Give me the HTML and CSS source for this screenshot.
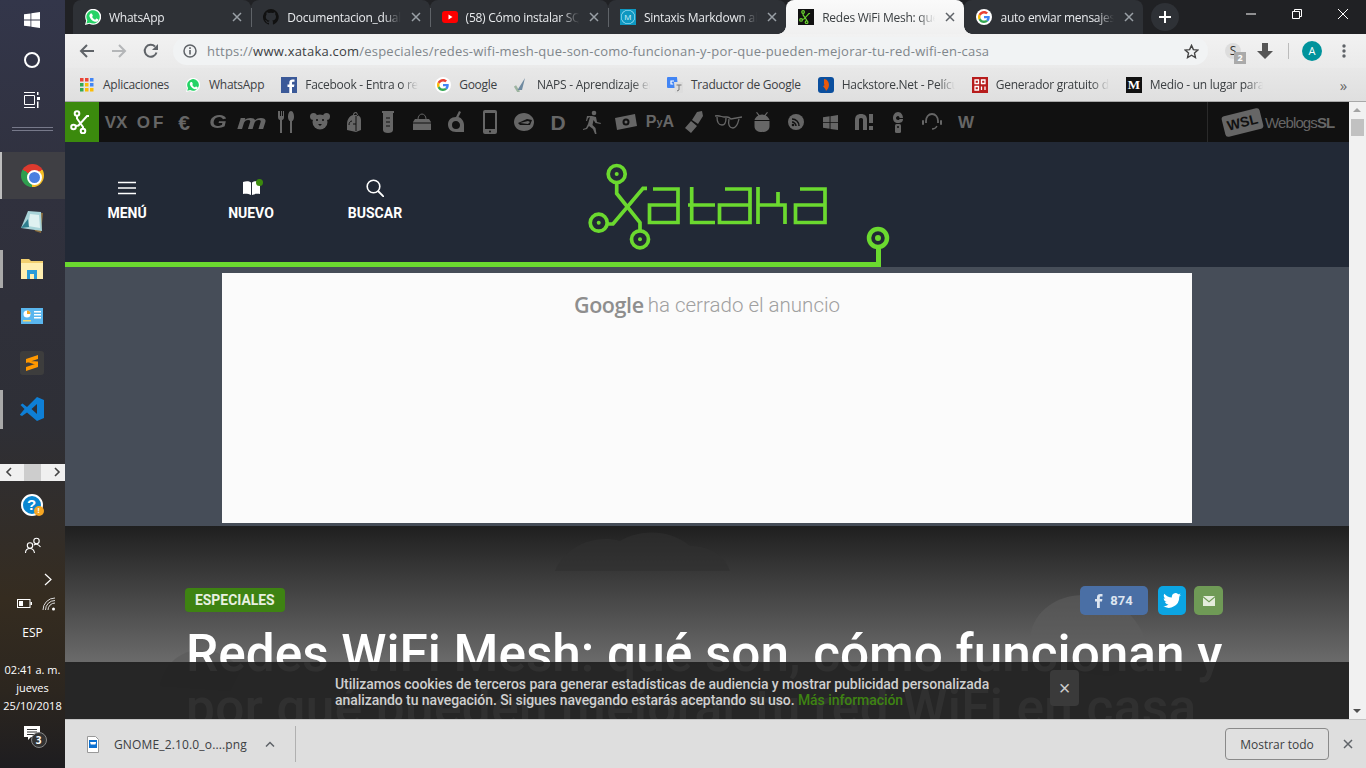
FILE: index.html
```html
<!DOCTYPE html>
<html lang="es">
<head>
    <meta charset="UTF-8">
    <title>Redes WiFi Mesh</title>
    <link rel="stylesheet" href="styles.css">
</head>
<body>
<svg class="defs" width="0" height="0">
    <symbol id="wa" viewBox="1 1 22 22">
        <path fill="#fff" d="M1 23l1.600-6A11 11 0 1 1 7 21.400z"/>
        <path fill="#25d366" d="M3 21l1.200-4.400A9.200 9.200 0 1 1 7.500 19.800z"/>
        <path fill="#fff" d="M8.900 6.800c-.3 0-.8.100-1.200.6-.5.500-1.300 1.300-1.300 3s1.300 3.500 1.500 3.700c.2.300 2.500 3.900 6.100 5.200 3 1.100 3.600.5 4.200.4.700 0 2.100-.9 2.400-1.700.3-.8.3-1.500.2-1.700l-2.800-1.500c-.3-.1-.6-.1-.8.200l-1.100 1.400c-.2.200-.4.300-.8.100-1.500-.7-3.200-1.900-4.400-4.100-.2-.3 0-.5.100-.7l.8-1c.1-.2.200-.4 0-.7l-1.200-3c-.2-.5-.6-.4-.8-.4z" transform="translate(1.500 1.500) scale(.86)"/>
    </symbol>
    <symbol id="gg" viewBox="-8 -8 64 64">
        <circle cx="24" cy="24" r="32" fill="#fff"/>
        <path fill="#EA4335" d="M24 9.500c3.540 0 6.710 1.220 9.210 3.600l6.850-6.850C35.900 2.380 30.470 0 24 0 14.620 0 6.510 5.380 2.560 13.220l7.980 6.190C12.430 13.720 17.740 9.500 24 9.500z"/>
        <path fill="#4285F4" d="M46.980 24.550c0-1.570-.15-3.090-.38-4.550H24v9.020h12.940c-.58 2.960-2.260 5.480-4.780 7.180l7.730 6c4.510-4.180 7.090-10.360 7.090-17.650z"/>
        <path fill="#FBBC05" d="M10.530 28.590c-.48-1.450-.76-2.990-.76-4.590s.27-3.140.76-4.590l-7.980-6.190C.92 16.460 0 20.120 0 24c0 3.880.92 7.540 2.560 10.780l7.970-6.190z"/>
        <path fill="#34A853" d="M24 48c6.480 0 11.930-2.130 15.890-5.810l-7.730-6c-2.150 1.450-4.920 2.300-8.160 2.300-6.260 0-11.570-4.220-13.470-9.910l-7.980 6.190C6.510 42.620 14.620 48 24 48z"/>
    </symbol>
    <symbol id="x-mark" viewBox="0 0 24 24">
        <g fill="none" stroke="currentColor" stroke-width="2">
            <circle cx="7" cy="3.500" r="2.300"/><circle cx="3.500" cy="17" r="2.300"/><circle cx="13" cy="21" r="2.300"/>
            <path d="M7 6v2.500l6 8.500v2M5.500 16l3-.5L17 6h2"/>
        </g>
    </symbol>
    <symbol id="close" viewBox="0 0 10 10">
        <path d="M1 1l8 8M9 1l-8 8" fill="none" stroke="currentColor" stroke-width="1.500"/>
    </symbol>
</svg>

<aside class="taskbar">
    <div class="tb-btn">
        <svg width="16" height="16" viewBox="0 0 16 16"><path fill="#fff" d="M0 2.300l6.500-.9v6.200H0zM7.300 1.300L16 0v7.600H7.300zM0 8.400h6.500v6.200L0 13.700zM7.300 8.400H16V16l-8.700-1.300z"/></svg>
    </div>
    <div class="tb-btn"><span class="cortana"></span></div>
    <div class="tb-btn">
        <svg width="16" height="16" viewBox="0 0 16 16"><path fill="none" stroke="#fff" d="M.5 3.500h10v9H.5zM0 .5h11M0 15.500h11"/><path fill="#fff" d="M13 0h1.500v3H13zM13 5h3v3h-3zM13 9.500h1.500V16H13z"/></svg>
    </div>
    <div class="tb-grip"></div>
    <ul class="tb-apps">
        <li class="tb-app tb-app-active"><span class="chrome-icon"></span></li>
        <li class="tb-app">
            <svg width="24" height="24" viewBox="0 0 24 24"><path fill="#8a6b3a" d="M9 2l14 1-2 20-6-2z"/><path fill="#a8d3d8" d="M8 1l13 1 1 19L1 18z"/><path fill="#dff1f1" d="M10 4l9 1 1 13-12-2z"/><path fill="#2f7f8f" d="M1 18l7-9 1 8z"/></svg>
        </li>
        <li class="tb-app tb-app-open">
            <svg width="22" height="20" viewBox="0 0 22 20"><path fill="#f2cf6f" d="M0 0h8l2 2h12v18H0z"/><path fill="#ffeeb0" d="M0 4h22v16H0z"/><path fill="#2a9bd8" d="M6 11h10v9h-3v-5H9v5H6z"/></svg>
        </li>
        <li class="tb-app">
            <svg width="22" height="16" viewBox="0 0 22 16"><rect width="22" height="16" fill="#5ab6ee"/><circle cx="6" cy="6" r="3.500" fill="#fff"/><path fill="#f5a623" d="M6 6V2.500A3.500 3.500 0 0 1 9.500 6z"/><path fill="#fff" d="M13 3h7v1.500h-7zM13 6h7v1.500h-7zM13 9h7v1.500h-7z"/><path fill="#f5d76e" d="M2 12h8v1.500H2z"/></svg>
        </li>
        <li class="tb-app">
            <span class="sublime-box">
                <svg width="12" height="16" viewBox="0 0 12 16"><path fill="#ff9800" d="M12 0v4L0 8V4zM12 6.500v4L0 6.500v-1zM12 8v4L0 16v-4z"/></svg>
            </span>
        </li>
        <li class="tb-app tb-app-open">
            <svg width="24" height="24" viewBox="0 0 24 24"><path fill="#0e7fd6" fill-rule="evenodd" d="M17 0l7 3v18l-7 3-10-8.500L2 19l-2-1v-.5L4.500 12 .5 8 2.500 6.500 7 10zM17 7l-5.500 5L17 17z"/></svg>
        </li>
    </ul>
    <div class="tb-scroller">
        <span class="tb-scroll-arrow">
            <svg width="8" height="10" viewBox="0 0 8 10"><path d="M6 1L2 5l4 4" fill="none" stroke="#444" stroke-width="1.600"/></svg>
        </span>
        <span class="tb-scroll-thumb"></span>
        <span class="tb-scroll-arrow">
            <svg width="8" height="10" viewBox="0 0 8 10"><path d="M2 1l4 4-4 4" fill="none" stroke="#444" stroke-width="1.600"/></svg>
        </span>
    </div>
    <div class="tray">
        <div class="tray-help">
            <span class="help-circle">?</span><span class="help-badge">!</span>
        </div>
        <div class="tray-people">
            <svg width="18" height="18" viewBox="0 0 18 18"><g fill="none" stroke="#fff" stroke-width="1.100"><circle cx="12.500" cy="4" r="2.700"/><circle cx="6" cy="8.500" r="2.700"/><path d="M1.500 16c0-3 2-4.500 4.500-4.500s4 1.500 4.500 4.500M10 8c1-1 4-1.500 6.500 2"/></g></svg>
        </div>
        <div class="tray-chevron">
            <svg width="9" height="13" viewBox="0 0 9 13"><path d="M1 1l6 5.500L1 12" fill="none" stroke="#fff" stroke-width="1.200"/></svg>
        </div>
        <div class="tray-status">
            <svg width="15" height="9" viewBox="0 0 15 9"><rect x=".5" y=".5" width="12.500" height="8" fill="none" stroke="#fff"/><rect x="2" y="2" width="4" height="5" fill="#fff"/><rect x="13.500" y="3" width="1.500" height="3" fill="#fff"/></svg>
            <svg width="14" height="14" viewBox="0 0 14 14"><g fill="none" stroke="#ddd"><path d="M1 13A12 12 0 0 1 13 1"/><path d="M3.500 13A9.500 9.500 0 0 1 13 3.500"/><path d="M6 13a7 7 0 0 1 7-7"/></g><circle cx="11.500" cy="12" r="1.500" fill="#fff"/></svg>
        </div>
        <div class="tray-lang">ESP</div>
        <div class="tray-clock">02:41 a. m.<br>jueves<br>25/10/2018</div>
        <div class="tray-notif">
            <svg width="16" height="14" viewBox="0 0 16 14"><path fill="#fff" d="M0 0h16v11H7l-3 3v-3H0z"/><path stroke="#333" d="M3 3.500h10M3 6h10M3 8.500h7"/></svg>
            <span class="notif-count">3</span>
        </div>
    </div>
</aside>

<div class="browser">
    <div class="tabstrip">
        <div class="tab">
            <svg class="fav"><use href="#wa"/></svg>
            <span class="tab-title">WhatsApp</span>
            <svg class="tab-close"><use href="#close"/></svg>
        </div>
        <div class="tab">
            <svg class="fav" viewBox="0 0 16 16"><path fill="#111" d="M8 0a8 8 0 0 0-2.500 15.600c.4.100.5-.2.500-.4v-1.400c-2.200.5-2.700-1-2.700-1-.4-.9-.9-1.200-.9-1.200-.7-.5.100-.5.100-.5.800.1 1.200.8 1.200.8.700 1.200 1.900.9 2.300.7.100-.5.300-.9.500-1.100-1.800-.2-3.700-.9-3.700-4 0-.9.300-1.600.8-2.100-.1-.2-.4-1 .1-2.100 0 0 .7-.2 2.200.8a7.600 7.600 0 0 1 4 0c1.500-1 2.200-.8 2.200-.8.400 1.100.2 1.900.1 2.100.5.600.8 1.300.8 2.100 0 3.100-1.900 3.700-3.700 3.900.3.300.6.700.6 1.500v2.200c0 .2.100.5.600.4A8 8 0 0 0 8 0z"/></svg>
            <span class="tab-title">Documentacion_dual_boot</span>
            <svg class="tab-close"><use href="#close"/></svg>
        </div>
        <div class="tab">
            <svg class="fav" viewBox="0 0 16 16"><rect y="2" width="16" height="12" rx="3" fill="#f00"/><path fill="#fff" d="M6.500 5.500l4 2.500-4 2.500z"/></svg>
            <span class="tab-title">(58) Cómo instalar SQLite</span>
            <svg class="tab-close"><use href="#close"/></svg>
        </div>
        <div class="tab tab-before-active">
            <span class="fav fav-md">M</span>
            <span class="tab-title">Sintaxis Markdown al detalle</span>
            <svg class="tab-close"><use href="#close"/></svg>
        </div>
        <div class="tab tab-active">
            <span class="fav fav-xataka"><svg width="14" height="14" color="#6bd62f"><use href="#x-mark"/></svg></span>
            <span class="tab-title">Redes WiFi Mesh: qué son</span>
            <svg class="tab-close"><use href="#close"/></svg>
        </div>
        <div class="tab">
            <svg class="fav" viewBox="0 0 16 16"><use href="#gg"/></svg>
            <span class="tab-title">auto enviar mensajes whatsapp</span>
            <svg class="tab-close"><use href="#close"/></svg>
        </div>
        <div class="tab-new">
            <svg width="12" height="12" viewBox="0 0 12 12"><path d="M6 0v12M0 6h12" stroke="#fff" stroke-width="2"/></svg>
        </div>
        <div class="win-controls">
            <svg width="10" height="10" viewBox="0 0 10 10"><path d="M0 5h10" stroke="#fff"/></svg>
            <svg width="10" height="10" viewBox="0 0 10 10"><path fill="none" stroke="#fff" d="M.5 2.500h7v7h-7zM2.500 2.500v-2h7v7h-2"/></svg>
            <svg width="10" height="10" viewBox="0 0 10 10"><path d="M0 0l10 10M10 0L0 10" stroke="#fff"/></svg>
        </div>
    </div>

    <div class="toolbar">
        <svg class="tool" width="16" height="16" viewBox="0 0 16 16"><path d="M15 8H2M8 2L2 8l6 6" fill="none" stroke="#5f6368" stroke-width="2"/></svg>
        <svg class="tool" width="16" height="16" viewBox="0 0 16 16"><path d="M1 8h13M8 2l6 6-6 6" fill="none" stroke="#b4b6b8" stroke-width="2"/></svg>
        <svg class="tool" width="16" height="16" viewBox="0 0 16 16"><path d="M13.500 9.500A6 6 0 1 1 12 3.500" fill="none" stroke="#5f6368" stroke-width="2"/><path fill="#5f6368" d="M15 1v6H9z"/></svg>
        <div class="omnibox">
            <svg width="14" height="14" viewBox="0 0 14 14"><circle cx="7" cy="7" r="6" fill="none" stroke="#5f6368" stroke-width="1.500"/><path d="M6.200 6h1.600v4.500H6.200zM6.200 3.300h1.600v1.600H6.200z" fill="#5f6368"/></svg>
            <span class="url">https://<b>www.xataka.com</b>/especiales/redes-wifi-mesh-que-son-como-funcionan-y-por-que-pueden-mejorar-tu-red-wifi-en-casa</span>
            <svg class="star" width="15" height="15" viewBox="0 0 16 16"><path d="M8 1.500l2 4.500 4.800.5-3.600 3.200 1 4.800L8 12l-4.200 2.500 1-4.800L1.200 6.500 6 6z" fill="none" stroke="#444" stroke-width="1.500"/></svg>
        </div>
        <div class="ext-s">S<span class="ext-badge">2</span></div>
        <svg class="ext-down" width="16" height="16" viewBox="0 0 16 16"><path fill="#555" d="M5 0h6v8h5l-8 8-8-8h5z"/></svg>
        <span class="tool-sep"></span>
        <span class="avatar">A</span>
        <svg class="dots" width="4" height="14" viewBox="0 0 4 14"><circle cx="2" cy="2" r="1.700" fill="#5f6368"/><circle cx="2" cy="7" r="1.700" fill="#5f6368"/><circle cx="2" cy="12" r="1.700" fill="#5f6368"/></svg>
    </div>

    <div class="bookmarks">
        <div class="bm">
            <svg class="bm-ico" viewBox="0 0 14 14"><g fill="#ea4335"><rect width="3.500" height="3.500"/><rect x="5" width="3.500" height="3.500"/></g><rect x="10" width="3.500" height="3.500" fill="#4285f4"/><rect y="5" width="3.500" height="3.500" fill="#34a853"/><rect x="5" y="5" width="3.500" height="3.500" fill="#fbbc05"/><rect x="10" y="5" width="3.500" height="3.500" fill="#4285f4"/><rect y="10" width="3.500" height="3.500" fill="#34a853"/><rect x="5" y="10" width="3.500" height="3.500" fill="#fbbc05"/><rect x="10" y="10" width="3.500" height="3.500" fill="#fbbc05"/></svg>
            <span class="bm-text">Aplicaciones</span>
        </div>
        <div class="bm">
            <svg class="bm-ico"><use href="#wa"/></svg>
            <span class="bm-text">WhatsApp</span>
        </div>
        <div class="bm">
            <svg class="bm-ico bm-ico-lg" viewBox="0 0 16 16"><rect width="16" height="16" fill="#3b5998"/><path fill="#fff" d="M11 16V10h2l.4-2.500H11V6c0-.8.300-1.200 1.200-1.200h1.300V2.500h-2c-2 0-3.200 1.200-3.200 3.200v1.800H6.500V10h1.800v6z"/></svg>
            <span class="bm-text bm-fade">Facebook - Entra o regístrate</span>
        </div>
        <div class="bm">
            <svg class="bm-ico bm-ico-lg" viewBox="0 0 16 16"><use href="#gg"/></svg>
            <span class="bm-text">Google</span>
        </div>
        <div class="bm">
            <svg class="bm-ico" viewBox="0 0 14 14"><path d="M1 8l3 5 1.500-.5" fill="none" stroke="#9db4a0" stroke-width="2.500"/><path d="M3.500 12L11 0l-3 12z" fill="#6f8aa0"/></svg>
            <span class="bm-text bm-fade">NAPS - Aprendizaje en línea</span>
        </div>
        <div class="bm">
            <svg class="bm-ico bm-ico-lg" viewBox="0 0 16 16"><path fill="#4285f4" d="M1 0h9l1 11H1a1 1 0 0 1-1-1V1a1 1 0 0 1 1-1z"/><path fill="#ddd" d="M7 5h9v10a1 1 0 0 1-1 1H8z"/><path d="M9.500 8h5M12 8v5l-2 1" fill="none" stroke="#777"/><path d="M7 4H4v3h2.200" fill="none" stroke="#fff" stroke-width="1.200"/></svg>
            <span class="bm-text">Traductor de Google</span>
        </div>
        <div class="bm">
            <svg class="bm-ico bm-ico-lg" viewBox="0 0 16 16"><rect width="16" height="16" rx="3" fill="#0b4f9e"/><path fill="#e8590c" d="M6 2c3 0 5 3 5 6s-2 5-3 6c0-2-2-3-3-5 1 0 2-1 1-2 0-2 0-3 0-5z"/></svg>
            <span class="bm-text bm-fade">Hackstore.Net - Películas</span>
        </div>
        <div class="bm">
            <svg class="bm-ico bm-ico-lg" viewBox="0 0 16 16"><rect width="16" height="16" fill="#b71c1c"/><path fill="none" stroke="#fff" stroke-width="1.300" d="M3 3h3.500v3.500H3zM9.500 3H13v3.500H9.500zM3 9.500h3.500V13H3zM9.500 9.500v3.500M13 9.500V13"/></svg>
            <span class="bm-text bm-fade">Generador gratuito de QR</span>
        </div>
        <div class="bm">
            <span class="medium-ico">M</span>
            <span class="bm-text bm-fade">Medio - un lugar para leer</span>
        </div>
        <span class="bm-more">»</span>
    </div>

    <div class="viewport">
        <main class="page">
            <nav class="sitebar">
                <a class="sitebar-home"><svg width="24" height="24" color="#fff"><use href="#x-mark"/></svg></a>
                <span class="sb-item sb-text">VX</span>
                <span class="sb-item sb-text sb-wide">OF</span>
                <span class="sb-item sb-text sb-big">€</span>
                <span class="sb-item sb-text sb-italic">G</span>
                <span class="sb-item sb-text sb-italic sb-wide-m">m</span>
                <span class="sb-item"><svg width="20" height="24" viewBox="0 0 20 24"><path d="M2 1v6c0 2 1 3 2 3v13h2V10c1 0 2-1 2-3V1H7v5H6V1H5v5H4V1zM15 1c-2 0-3 3-3 6 0 2 1 4 2 4v12h2V11c1 0 2-2 2-4 0-3-1-6-3-6z"/></svg></span>
                <span class="sb-item"><svg width="20" height="18" viewBox="0 0 20 18"><circle cx="3.500" cy="3.500" r="3.500"/><circle cx="16.500" cy="3.500" r="3.500"/><ellipse cx="10" cy="9" rx="7.500" ry="7.500"/><circle cx="7" cy="7" r="1" fill="#111"/><circle cx="13" cy="7" r="1" fill="#111"/><path d="M8 11h4l-2 2z" fill="#111"/></svg></span>
                <span class="sb-item"><svg width="16" height="20" viewBox="0 0 16 20"><path d="M7 3c-4 1-6 5-6 9v6l9 2 5-2V8c0-3-2-5-5-5zM7 3c0-2 1-3 3-3 1 0 2 2 2 4h-1c0-2-1-3-1-3-1 0-2 1-2 2z"/><path d="M6 9c-2 0-3 2-3 4M10 4v15M7 12h3" stroke="#111" fill="none"/></svg></span>
                <span class="sb-item"><svg width="14" height="24" viewBox="0 0 14 24"><path d="M1 1h12v2h-1v17c0 2-2 3-5 3s-5-1-5-3V3H1z"/><path d="M5 8h4M5 12h4M5 16h4" stroke="#111"/></svg></span>
                <span class="sb-item"><svg width="18" height="18" viewBox="0 0 18 18"><path d="M5 6c0-3 2-5 4-5s4 2 4 5" fill="none" stroke="#666"/><path d="M2 6h14l2 3v8H0V9z"/><path d="M0 10h18" stroke="#111"/></svg></span>
                <span class="sb-item"><svg width="18" height="22" viewBox="0 0 18 22"><path fill-rule="evenodd" d="M12 0l2 1-2.500 5c3 1 5.500 4 5.500 8v7H9c-5 0-8-3-8-7.500S4 6 9 6zM9 10a4 4 0 1 0 4 4c0-2-2-4-4-4z"/></svg></span>
                <span class="sb-item"><svg width="14" height="24" viewBox="0 0 14 24"><path d="M2 0h10a2 2 0 0 1 2 2v20a2 2 0 0 1-2 2H2a2 2 0 0 1-2-2V2a2 2 0 0 1 2-2zM2 3v16h10V3z" fill-rule="evenodd"/><circle cx="7" cy="21.500" r="1" fill="#111"/></svg></span>
                <span class="sb-item"><svg width="20" height="18" viewBox="0 0 20 18"><path d="M10 0c5 0 10 4 10 9 0 6-5 9-10 9C4 18 0 14 0 9 0 4 4 0 10 0z"/><path d="M4 10l9-4 5 1-2 5H6z" fill="#111"/><path d="M6 10l8-2 2 1-2 2z"/></svg></span>
                <span class="sb-item sb-text sb-big">D</span>
                <span class="sb-item"><svg width="18" height="24" viewBox="0 0 18 24"><circle cx="11" cy="3" r="2.300"/><path d="M9 6l4 1 1 5 4 1-.5 1-5-1-2-3-1 5 3 3 1 6h-1.500L10 19l-4-3-2 3-4 1v-1l3-1 2-4 2-7-2 1-1 3H3l1-5z"/></svg></span>
                <span class="sb-item"><svg width="22" height="16" viewBox="0 0 22 16"><path d="M0 4l20-4 2 12-20 4z"/><circle cx="11" cy="8" r="3.500" fill="#111"/><circle cx="11" cy="8" r="1.500"/></svg></span>
                <span class="sb-item sb-text sb-pya">P<sub>y</sub>A</span>
                <span class="sb-item"><svg width="18" height="22" viewBox="0 0 18 22"><path d="M6 10l6 5-6 7-6-5zM7 9l5-8 5-1 1 5-5 8z"/></svg></span>
                <span class="sb-item"><svg width="27" height="14" viewBox="0 0 27 14"><g fill="none" stroke="#666" stroke-width="1.300"><path d="M0 1c4-1 7 1 9 1h3c2 0 3 1 4 2l11-2"/><path d="M2 2c0 5 2 8 5 8s4-3 4-7M14 4c-1 5 0 9 4 9s5-5 6-9"/></g></svg></span>
                <span class="sb-item"><svg width="16" height="20" viewBox="0 0 16 20"><path d="M3 0l2.500 3a6 6 0 0 1 5 0L13 0l1 .6-2.300 3C14 5 15 6.500 15.500 8H.5C1 6.500 2 5 4.300 3.600L2 .6zM.5 9h15v5c0 4-3 6-7.500 6S.5 18 .5 14z"/></svg></span>
                <span class="sb-item"><svg width="16" height="16" viewBox="0 0 16 16"><circle cx="8" cy="8" r="8"/><g fill="none" stroke="#111" stroke-width="1.500"><path d="M4 5c4 0 7 3 7 7M4 8c2 0 4 2 4 4"/></g><circle cx="5" cy="11" r="1.300" fill="#111"/></svg></span>
                <span class="sb-item"><svg width="15" height="15" viewBox="0 0 16 16"><path d="M0 2.300l7-1v6.300H0zM8 1.200L16 0v7.600H8zM0 8.400h7v6.300l-7-1zM8 8.400h8V16l-8-1.200z"/></svg></span>
                <span class="sb-item"><svg width="19" height="16" viewBox="0 0 19 16"><path d="M0 16V6c0-4 2-6 6-6s6 2 6 6v10H8V6c0-1 0-2-2-2S4 5 4 6v10zM14 0h4v9h-4zM14 12h4v4h-4z"/></svg></span>
                <span class="sb-item"><svg width="12" height="22" viewBox="0 0 12 22"><path d="M11 7H7.500c0-1-.5-2-1.500-2s-2 1-2 2 1 2 2 2 1.500-.5 1.500-1H11c0 3-2 4-5 4S1 10 1 7s2-6 5-6 5 3 5 6z"/><rect x="3" y="13" width="6" height="9" rx="1.500"/><circle cx="6" cy="16" r="1" fill="#111"/></svg></span>
                <span class="sb-item"><svg width="20" height="18" viewBox="0 0 20 18"><path d="M4 10V8c0-4 2.500-7 6-7s6 3 6 7v2" fill="none" stroke="#666" stroke-width="1.800"/><rect y="7" width="2" height="5" rx="1"/><rect x="18" y="7" width="2" height="5" rx="1"/><path d="M15 13c-1 2-3 3-5 3" fill="none" stroke="#666" stroke-width="1.300"/></svg></span>
                <span class="sb-item sb-text">W</span>
                <div class="wsl">
                    <span class="wsl-badge">WSL</span>
                    <span class="wsl-name">Weblogs<b>SL</b></span>
                </div>
            </nav>

            <header class="masthead">
                <a class="mast-link">
                    <svg width="18" height="13" viewBox="0 0 18 13"><path d="M0 1h18M0 6.500h18M0 12h18" stroke="#fff" stroke-width="1.600"/></svg>
                    <span>MENÚ</span>
                </a>
                <a class="mast-link">
                    <span class="book">
                        <svg width="17" height="14" viewBox="0 0 17 14"><path fill="#fff" d="M0 1c3-1 6-1 8 .5V14c-2-1-5-1.500-8-1zM9 1.500C11 0 14 0 17 1v12c-3-.5-6 0-8 1z"/></svg>
                        <i class="book-dot"></i>
                    </span>
                    <span>NUEVO</span>
                </a>
                <a class="mast-link">
                    <svg width="18" height="18" viewBox="0 0 18 18"><circle cx="7.500" cy="7.500" r="6.300" fill="none" stroke="#fff" stroke-width="1.600"/><path d="M12 12l6 6" stroke="#fff" stroke-width="1.800"/></svg>
                    <span>BUSCAR</span>
                </a>
                <svg class="logo" width="245" height="95" viewBox="0 0 245 95">
                    <g fill="none" stroke="#6bd92f" stroke-width="3.700">
                        <circle cx="28.700" cy="14" r="8.500"/>
                        <circle cx="10.700" cy="62.700" r="8.500"/>
                        <circle cx="52" cy="79.300" r="8.500"/>
                        <path d="M28.700 23v10.500L52 62.700V71"/>
                        <path d="M20 64h5l30-35.700h4"/>
                        <path d="M65 29h25v33.500H61.500V45H90"/>
                        <path d="M103.700 27v35.500H127M100 45h27"/>
                        <path d="M137 29h25v33.500h-30.500V45H162"/>
                        <path d="M170 27v37M170 45h20V32M190 45h7v19"/>
                        <path d="M212 29h25v33.500h-29.500V45H237"/>
                    </g>
                    <g fill="#6bd92f">
                        <circle cx="28.700" cy="14" r="2"/>
                        <circle cx="10.700" cy="62.700" r="2"/>
                        <circle cx="52" cy="79.300" r="2"/>
                    </g>
                </svg>
                <svg class="circuit" width="830" height="46" viewBox="0 0 830 46">
                    <g fill="none" stroke="#6bd92f">
                        <circle cx="813" cy="17" r="9" stroke-width="4.500"/>
                        <path d="M0 43.500h813.500V26" stroke-width="5"/>
                    </g>
                    <circle cx="813" cy="17" r="3" fill="#6bd92f"/>
                </svg>
            </header>

            <section class="ad-band">
                <div class="ad">
                    <span class="ad-google">Google</span>
                    <span class="ad-msg">ha cerrado el anuncio</span>
                </div>
            </section>

            <section class="hero">
                <svg class="hero-clouds" width="1284" height="193" viewBox="0 0 1284 193">
                    <path fill="#303030" d="M490 45c10-25 40-37 65-30 20-12 50-12 70 5 20 0 35 10 40 25z"/>
                    <path fill="#5e5e5e" d="M965 110c5-30 35-45 65-40 30 5 50 30 55 60l-40 20-80-10z"/>
                    <path fill="#5a5a5a" d="M95 160c5-25 25-40 50-35 15 3 25 10 30 20l-10 20z"/>
                </svg>
                <div class="hero-top">
                    <span class="tag">ESPECIALES</span>
                    <div class="share">
                        <a class="share-btn share-fb">
                            <svg width="8" height="14" viewBox="0 0 8 14"><path fill="#dde5f0" d="M2 14V7.500H0V5h2V3.300C2 1 3.300 0 5.300 0H7.500v2.500H6C5 2.500 4.800 3 4.800 3.800V5h2.600l-.4 2.500H4.800V14z"/></svg>
                            <span>874</span>
                        </a>
                        <a class="share-btn share-tw">
                            <svg width="18" height="15" viewBox="0 0 18 15"><path fill="#fff" d="M18 1.800c-.7.300-1.400.5-2.100.6.800-.5 1.300-1.200 1.600-2-.7.400-1.500.7-2.300.9A3.700 3.700 0 0 0 8.900 4.600C5.900 4.500 3.200 3 1.300.7c-1 1.700-.5 3.900 1.100 5-.6 0-1.200-.2-1.700-.5 0 1.800 1.300 3.300 3 3.700-.5.100-1.100.2-1.700.1.500 1.500 1.900 2.500 3.500 2.600A7.500 7.500 0 0 1 0 13.100 10.500 10.500 0 0 0 16.200 3.700c.7-.5 1.300-1.100 1.800-1.900z"/></svg>
                        </a>
                        <a class="share-btn share-mail">
                            <svg width="12" height="10" viewBox="0 0 12 10"><path fill="#e4ecdc" d="M0 0h12L6 5zM0 1.500V10h12V1.500L6 6.500z"/></svg>
                        </a>
                    </div>
                </div>
                <h1 class="hero-title">Redes WiFi Mesh: qué son, cómo funcionan y <span class="hero-title-rest">por qué pueden mejorar tu red WiFi en casa</span></h1>
            </section>
        </main>

        <div class="scrollbar">
            <span class="sb-arrow-up"></span>
            <span class="sb-thumb"></span>
            <span class="sb-arrow-down"></span>
        </div>

        <div class="cookies">
            <p class="cookies-text">Utilizamos cookies de terceros para generar estadísticas de audiencia y mostrar publicidad personalizada<br>analizando tu navegación. Si sigues navegando estarás aceptando su uso. <a>Más información</a></p>
            <span class="cookies-close">×</span>
        </div>
    </div>

    <div class="downloads">
        <svg width="12" height="17" viewBox="0 0 12 17"><path fill="#fff" stroke="#999" d="M.5.500h8l3 3v13H.5z"/><rect x="2" y="4" width="8" height="8" fill="#0a6fd0"/><path fill="#fff" d="M3 6h6v1l-1 2-1-1-1 1-1-1-1 1z"/></svg>
        <span class="dl-name">GNOME_2.10.0_o....png</span>
        <svg class="dl-caret" width="10" height="6" viewBox="0 0 10 6"><path d="M1 5.500l4-4 4 4" fill="none" stroke="#5f6368" stroke-width="1.500"/></svg>
        <span class="dl-sep"></span>
        <button class="dl-all">Mostrar todo</button>
        <svg class="dl-close" color="#5f6368"><use href="#close"/></svg>
    </div>
</div>
</body>
</html>
```

FILE: styles.css
```css
* {
    box-sizing: border-box;
}
html, body {
    height: 100%;
}
body {
    margin: 0;
    display: flex;
    overflow: hidden;
    font-family: "Open Sans", "Noto Sans", sans-serif;
    background: #222;
}
.defs {
    position: absolute;
}

/* windows taskbar */
.taskbar {
    width: 65px;
    flex: none;
    display: flex;
    flex-direction: column;
    color: #fff;
    background: linear-gradient(#33364a 0, #30313e 25%, #2e2f36 55%, #352c20 78%, #2c261f 90%, #1e1d20 100%);
}
.tb-btn {
    height: 40px;
    display: flex;
    align-items: center;
    justify-content: center;
    padding-right: 2px;
}
.cortana {
    width: 16px;
    height: 16px;
    border: 2px solid #fff;
    border-radius: 50%;
}
.tb-grip {
    width: 41px;
    height: 4px;
    margin: 7px auto 21px;
    border-top: 1px solid #77798a;
    border-bottom: 1px solid #77798a;
}
.tb-apps {
    list-style: none;
    margin: 0;
    padding: 0;
}
.tb-app {
    position: relative;
    height: 46.800px;
    display: flex;
    align-items: center;
    justify-content: center;
    padding-right: 1px;
}
.tb-app-active {
    background: #3f3f44;
}
.tb-app-active::before {
    content: "";
    position: absolute;
    left: 0;
    top: 0;
    bottom: 0;
    width: 2px;
    background: #bdbdbd;
}
.tb-app-open::before {
    content: "";
    position: absolute;
    left: 0;
    top: 4px;
    bottom: 4px;
    width: 3px;
    background: #a9a9a9;
}
.chrome-icon {
    position: relative;
    width: 23px;
    height: 23px;
    border-radius: 50%;
    background: conic-gradient(from 60deg, #f6bf26 0 120deg, #2f9e4f 0 240deg, #dd3a2e 0);
}
.chrome-icon::after {
    content: "";
    position: absolute;
    left: 6px;
    top: 6px;
    width: 11px;
    height: 11px;
    border-radius: 50%;
    background: #4a7fe0;
    border: 2px solid #fff;
}
.sublime-box {
    width: 24px;
    height: 24px;
    display: flex;
    align-items: center;
    justify-content: center;
    border-radius: 3px;
    background: #3d3d3d;
}
.tb-scroller {
    height: 17px;
    margin-top: 31px;
    display: flex;
    justify-content: space-between;
    background: #f0f0f0;
}
.tb-scroll-arrow {
    width: 17px;
    display: flex;
    align-items: center;
    justify-content: center;
}
.tb-scroll-thumb {
    width: 17px;
    background: #cdcdcd;
}
.tray {
    display: flex;
    flex-direction: column;
    align-items: center;
    font-size: 12px;
}
.tray-help {
    position: relative;
    left: -1px;
    height: 50px;
    padding-top: 13px;
}
.help-circle {
    display: block;
    width: 22px;
    height: 22px;
    border-radius: 50%;
    background: #0a86d0;
    border: 2px solid #fff;
    font: bold 15px/18px "Liberation Sans", sans-serif;
    text-align: center;
}
.help-badge {
    position: absolute;
    left: 13px;
    top: 25px;
    width: 10px;
    height: 10px;
    border-radius: 50%;
    background: #f5a623;
    font: bold 8px/10px "Liberation Sans", sans-serif;
    text-align: center;
}
.tray-people {
    height: 32px;
    padding-top: 6px;
}
.tray-chevron {
    height: 30px;
    align-self: flex-end;
    padding: 10px 12px 0 0;
}
.tray-status {
    height: 22px;
    width: 100%;
    padding: 0 9px 0 17px;
    display: flex;
    align-items: center;
    justify-content: space-between;
}
.tray-lang {
    margin-top: 8px;
    height: 20px;
    line-height: 20px;
}
.tray-clock {
    margin-top: 18px;
    text-align: center;
    line-height: 18px;
    font-size: 11px;
    white-space: nowrap;
}
.tray-notif {
    position: relative;
    margin-top: 11px;
    left: -1px;
}
.notif-count {
    position: absolute;
    left: 7px;
    top: 6px;
    width: 16px;
    height: 16px;
    border-radius: 50%;
    background: #333;
    border: 1px solid #888;
    font: bold 10px/14px "Open Sans", sans-serif;
    text-align: center;
}

/* chrome frame */
.browser {
    flex: 1;
    min-width: 0;
    display: flex;
    flex-direction: column;
}
.tabstrip {
    height: 34px;
    flex: none;
    display: flex;
    padding-left: 8px;
    background: #202124;
}
.tab {
    position: relative;
    width: 178.300px;
    display: flex;
    align-items: center;
    padding: 0 7px 0 12px;
    gap: 8px;
    color: #e8eaed;
    font-size: 12px;
    letter-spacing: -.25px;
    background: #2e3136;
    border-radius: 8px 8px 0 0;
}
.tab + .tab::before {
    content: "";
    position: absolute;
    left: 0;
    top: 8px;
    bottom: 7px;
    width: 1px;
    background: #5f6368;
}
.tab-active::before,
.tab-active + .tab::before {
    display: none;
}
.tab-active {
    background: linear-gradient(#fafafa, #f0f0f0);
    color: #3c4043;
    z-index: 1;
}
.tab-active::after,
.tab-before-active::after {
    content: "";
    position: absolute;
    bottom: 0;
    width: 8px;
    height: 8px;
}
.tab-active::after {
    right: -8px;
    background: radial-gradient(circle at 100% 0, transparent 7.500px, #f0f0f0 8px);
}
.tab-before-active::after {
    right: 0;
    background: radial-gradient(circle at 0 0, transparent 7.500px, #f0f0f0 8px);
}
.fav {
    width: 16px;
    height: 16px;
    flex: none;
}
.fav-md {
    background: radial-gradient(circle, transparent 6px, #6cc6e2 6.500px, #6cc6e2 7px, transparent 7.500px), #0e97c0;
    color: #d9f2fa;
    font-size: 8px;
    letter-spacing: 0;
    line-height: 16px;
    text-align: center;
}
.fav-xataka {
    background: #111;
    display: flex;
    align-items: center;
    justify-content: center;
}
.tab-title {
    flex: 1;
    min-width: 0;
    overflow: hidden;
    white-space: nowrap;
    -webkit-mask-image: linear-gradient(90deg, #000 85%, transparent);
    mask-image: linear-gradient(90deg, #000 85%, transparent);
}
.tab-close {
    width: 10px;
    height: 10px;
    flex: none;
    margin: 0 2px;
    color: #9aa0a6;
}
.tab-active .tab-close {
    color: #5f6368;
}
.tab-new {
    width: 28px;
    height: 28px;
    margin: 3px 0 0 8px;
    display: flex;
    align-items: center;
    justify-content: center;
    border-radius: 50%;
    background: #2e3136;
}
.win-controls {
    margin-left: auto;
    width: 120px;
    padding: 9px 18px 0 0;
    display: flex;
    justify-content: space-between;
}
.toolbar {
    height: 34px;
    flex: none;
    display: flex;
    align-items: center;
    padding-left: 14px;
    background: linear-gradient(#f2f2f2, #eaeaea);
}
.tool {
    margin-right: 16px;
}
.omnibox {
    width: 1035px;
    height: 28px;
    margin-left: -2px;
    display: flex;
    align-items: center;
    padding: 0 10px;
    gap: 10px;
    border-radius: 14px;
    background: #f1f3f4;
}
.url {
    flex: 1;
    font-size: 13px;
    letter-spacing: .22px;
    white-space: nowrap;
    color: #80868b;
}
.url b {
    font-weight: 400;
    color: #3c4043;
}
.star {
    margin-right: -1px;
}
.ext-s {
    position: relative;
    width: 16px;
    height: 16px;
    margin-left: 17px;
    border-radius: 50%;
    background: #ddd;
    color: #333;
    font-size: 12px;
    line-height: 16px;
    text-align: center;
}
.ext-badge {
    position: absolute;
    left: 9px;
    top: 9px;
    width: 12px;
    height: 12px;
    background: #aaa;
    color: #fff;
    font-size: 9px;
    font-weight: 700;
    line-height: 12px;
}
.ext-down {
    margin-left: 16px;
}
.tool-sep {
    width: 1px;
    height: 16px;
    margin: 0 13px 0 15px;
    background: #bbb;
}
.avatar {
    width: 20px;
    height: 20px;
    border-radius: 50%;
    background: #00939c;
    color: #fff;
    font-size: 11px;
    line-height: 20px;
    text-align: center;
}
.dots {
    margin-left: 20px;
}
.bookmarks {
    height: 34px;
    flex: none;
    display: flex;
    align-items: center;
    padding: 0 0 0 15px;
    font-size: 12px;
    letter-spacing: -.27px;
    color: #3c4043;
    background: linear-gradient(#e8e8e8, #dfdfdf);
    border-bottom: 1px solid #a8a8a8;
}
.bm {
    display: flex;
    align-items: center;
    gap: 9px;
    margin-right: 17px;
}
.bm-ico {
    width: 14px;
    height: 14px;
    flex: none;
}
.bm-ico-lg {
    width: 16px;
    height: 16px;
    margin-right: -1px;
}
.bm-text {
    white-space: nowrap;
}
.bm-fade {
    display: block;
    width: 113px;
    overflow: hidden;
    -webkit-mask-image: linear-gradient(90deg, #000 85%, transparent);
    mask-image: linear-gradient(90deg, #000 85%, transparent);
}
.medium-ico {
    width: 16px;
    height: 16px;
    margin-right: -1px;
    background: #111;
    color: #fff;
    font: bold 13px/16px "Liberation Serif", serif;
    text-align: center;
}
.bm-more {
    margin-left: 60px;
    font-size: 15px;
    color: #666;
}

/* page */
.viewport {
    position: relative;
    flex: 1;
    min-height: 0;
    display: flex;
}
.page {
    flex: 1;
    min-width: 0;
    overflow: hidden;
    background: #464d58;
}
.sitebar {
    height: 40px;
    display: flex;
    align-items: center;
    background: #111;
}
.sitebar-home {
    width: 34px;
    height: 40px;
    display: flex;
    align-items: center;
    justify-content: center;
    background: #3b8a0d;
}
.sb-item {
    width: 34px;
    flex: none;
    display: flex;
    align-items: center;
    justify-content: center;
    fill: #666;
}
.sb-text {
    color: #666;
    font: 700 17px/1 "Liberation Sans", sans-serif;
}
.sb-wide {
    padding-left: 3px;
    letter-spacing: 3px;
}
.sb-big {
    font-size: 21px;
}
.sb-italic {
    font-size: 18px;
    font-style: italic;
    font-weight: 700;
    transform: scaleX(1.250);
}
.sb-wide-m {
    font-size: 20px;
    line-height: 20px;
    transform: scaleX(1.700);
}
.sb-pya {
    font-size: 16px;
}
.sb-pya sub {
    font-size: 11px;
}
.wsl {
    height: 40px;
    margin-left: auto;
    width: 142px;
    padding-left: 15px;
    display: flex;
    align-items: center;
    gap: 3px;
    border-left: 1px solid #2a2a2a;
    color: #666;
}
.wsl-badge {
    padding: 3px 4px;
    border-radius: 3px;
    background: #666;
    color: #111;
    font: 700 14px/15px "Liberation Sans", sans-serif;
    transform: rotate(-14deg);
}
.wsl-name {
    font: 15px "Liberation Sans", sans-serif;
    letter-spacing: -.9px;
}
.masthead {
    position: relative;
    height: 125px;
    display: flex;
    background: #222936;
}
.mast-link {
    width: 124px;
    height: 80px;
    padding-top: 37px;
    display: flex;
    flex-direction: column;
    align-items: center;
    justify-content: flex-start;
    color: #fff;
    font: 700 14px/16px Roboto, sans-serif;
}
.mast-link svg {
    height: 18px;
    margin-bottom: 8px;
}
.book {
    position: relative;
    height: 18px;
    margin-bottom: 8px;
}
.book svg {
    height: 14px;
    margin: 2px 0 0;
    display: block;
}
.book-dot {
    position: absolute;
    right: -3px;
    top: 0;
    width: 7px;
    height: 7px;
    border-radius: 50%;
    background: #3b8a0d;
}
.logo {
    margin: 18px 0 0 151px;
}
.circuit {
    position: absolute;
    left: 0;
    bottom: 0;
}
.ad-band {
    height: 259px;
    padding: 6px 0 3px 157px;
}
.ad {
    width: 970px;
    height: 250px;
    padding-top: 17px;
    display: flex;
    justify-content: center;
    align-items: flex-start;
    gap: 4px;
    background: #fbfbfb;
}
.ad-google {
    color: #8e8e8e;
    font: 600 21.500px/30px "Open Sans", sans-serif;
    letter-spacing: -.4px;
}
.ad-msg {
    color: #a0a0a0;
    font: 300 20.500px/30px Roboto, sans-serif;
}
.hero {
    position: relative;
    height: 193px;
    padding: 60px 126px 0 120px;
    background: linear-gradient(#1f1f1f, #6c6c6c 72%, #707070);
}
.hero-clouds {
    position: absolute;
    left: 0;
    top: 0;
    opacity: .6;
}
.hero-top {
    position: relative;
    display: flex;
    justify-content: space-between;
    align-items: flex-start;
}
.tag {
    margin-top: 2px;
    height: 24px;
    padding: 0 10px;
    border-radius: 4px;
    background: #3e8312;
    color: #e8f0e0;
    font: 700 13.900px/25px Roboto, sans-serif;
}
.share {
    display: flex;
    gap: 8px;
}
.share-btn {
    height: 29px;
    display: flex;
    align-items: center;
    justify-content: center;
    border-radius: 5px;
}
.share-fb {
    width: 68px;
    margin-right: 2px;
    gap: 7px;
    background: #4a6fa5;
    color: #dde5f0;
    font: 700 13px Roboto, sans-serif;
}
.share-tw {
    width: 28px;
    background: #0ba5e3;
}
.share-mail {
    width: 29px;
    background: #6f9a56;
}
.hero-title {
    position: relative;
    margin: 12px -4px 0 1px;
    color: #fff;
    font: 500 51.300px/54px Roboto, sans-serif;
}
.hero-title-rest {
    letter-spacing: .4px;
}
.scrollbar {
    position: relative;
    width: 17px;
    flex: none;
    display: flex;
    flex-direction: column;
    align-items: center;
    background: #f1f1f1;
}
.sb-arrow-up,
.sb-arrow-down {
    position: absolute;
    left: 4px;
    width: 0;
    height: 0;
    border-left: 4px solid transparent;
    border-right: 4px solid transparent;
}
.sb-arrow-up {
    top: 6px;
    border-bottom: 4px solid #a3a3a3;
}
.sb-arrow-down {
    bottom: 6px;
    border-top: 4px solid #505050;
}
.sb-thumb {
    width: 13px;
    height: 17px;
    margin-top: 17px;
    background: #c1c1c1;
}
.cookies {
    position: absolute;
    left: 0;
    right: 17px;
    bottom: 0;
    height: 57px;
    display: flex;
    align-items: flex-start;
    padding: 8px 0 0 270px;
    background: rgba(32, 32, 32, .93);
}
.cookies-text {
    width: 715px;
    margin: 6px 0 0;
    color: #cfcfcf;
    font: 500 14px/16px Roboto, sans-serif;
    letter-spacing: -.06px;
    white-space: nowrap;
}
.cookies-text a {
    color: #3e8312;
}
.cookies-close {
    width: 29px;
    height: 36px;
    border-radius: 4px;
    background: #3a3a3a;
    color: #ccc;
    font: 20px/36px "Liberation Sans", sans-serif;
    text-align: center;
}
.downloads {
    height: 49px;
    flex: none;
    display: flex;
    align-items: center;
    padding: 0 13px 0 22px;
    background: #dedede;
    border-top: 1px solid #c4c4c4;
    font-size: 12px;
    color: #3c4043;
}
.dl-name {
    margin-left: 15px;
    width: 135px;
    letter-spacing: .15px;
    white-space: nowrap;
}
.dl-caret {
    margin-left: 16px;
}
.dl-sep {
    width: 1px;
    height: 36px;
    margin-left: 20px;
    background: #b0b0b0;
}
.dl-all {
    width: 104px;
    height: 32px;
    margin-left: auto;
    border: 1px solid #8a8a8a;
    border-radius: 4px;
    background: #e0e0e0;
    color: #3c4043;
    font: 12px "Open Sans", sans-serif;
}
.dl-close {
    width: 10px;
    height: 10px;
    margin-left: 14px;
}
```
